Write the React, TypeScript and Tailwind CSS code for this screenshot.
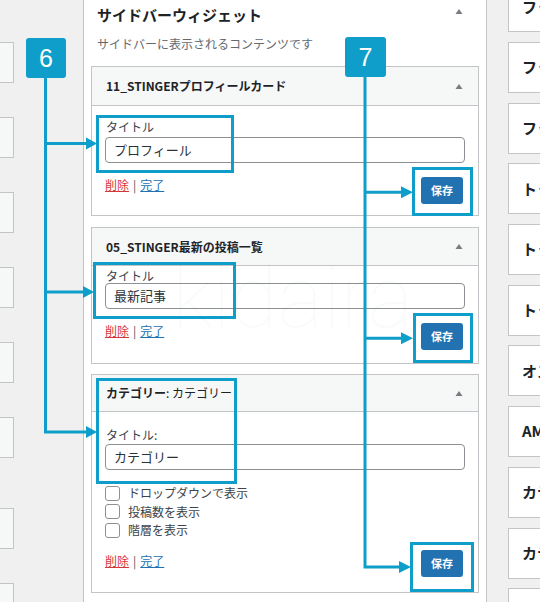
import React from "react";

const Tri = () => (
  <svg width="8" height="5" viewBox="0 0 8 5" className="block">
    <path d="M4 0 L7.5 5 L0.5 5 Z" fill="#787c82" />
  </svg>
);

const SaveBtn = () => (
  <button className="w-[42px] h-[27px] mr-[2px] rounded-[3px] bg-[#2271b1] text-white text-[11px] font-bold leading-none flex items-center justify-center">
    保存
  </button>
);

const Links = () => (
  <div className="text-[12px] leading-[16px] flex items-center gap-[4px]">
    <span className="text-[#d63638] underline">削除</span>
    <span className="text-[#50575e]">|</span>
    <span className="text-[#2271b1] underline">完了</span>
  </div>
);

const Input = ({ value }: { value: string }) => (
  <div className="h-[26px] border border-[#8c8f94] rounded-[4px] bg-white flex items-center pl-[8px] text-[13px] text-[#2c3338]">
    {value}
  </div>
);

const Check = ({ label }: { label: string }) => (
  <div className="h-[18.5px] flex items-center gap-[8px]">
    <span className="w-[15px] h-[15px] border border-[#8c8f94] rounded-[3px] bg-white" />
    <span className="text-[12px] text-[#3c434a]">{label}</span>
  </div>
);

const rightItems = [
  "フッターウィジェット1",
  "フッターウィジェット2",
  "フッターウィジェット3",
  "トップページ上部",
  "トップページ下部",
  "トップページ記事下",
  "オススメ記事",
  "AMP用広告",
  "カテゴリー上部",
  "カテゴリー下部",
  "",
];

const LeftBox = ({ extra = "" }: { extra?: string }) => (
  <div className={"w-[14px] h-[41px] shrink-0 bg-[#f6f7f7] border-y border-r border-[#c3c4c7] " + extra} />
);

export default function App() {
  return (
    <div className="relative w-[540px] h-[602px] overflow-hidden bg-[#f0f0f1] font-['Noto_Sans_CJK_JP',sans-serif]">
      <div className="flex h-full">
        {/* left column */}
        <div className="w-[84px] shrink-0 h-full overflow-hidden border-r border-[#c3c4c7] bg-[#f0f0f1] pt-[42px] flex flex-col gap-[34px]">
          <LeftBox />
          <LeftBox />
          <LeftBox />
          <LeftBox />
          <LeftBox />
          <LeftBox />
          <LeftBox extra="mt-[16px]" />
          <LeftBox />
        </div>

        {/* main panel */}
        <div className="w-[403px] shrink-0 h-full border-r border-[#c3c4c7] bg-white">
          <div className="h-[30px] flex justify-between pl-[13px] pr-[23px]">
            <h2 className="self-center -mt-[2px] text-[15px] font-bold text-[#1d2327] leading-none">
              サイドバーウィジェット
            </h2>
            <div className="mt-[9px]">
              <Tri />
            </div>
          </div>
          <div className="h-[28px] flex items-center pl-[13px] text-[12px] text-[#646970]">
            サイドバーに表示されるコンテンツです
          </div>

          <div className="mx-[7px] mt-[8px] flex flex-col">
            {/* card 1 */}
            <div className="border border-[#c3c4c7] bg-white">
              <div className="h-[39px] border-b border-[#c3c4c7] bg-[#f6f7f7] flex items-center justify-between pl-[14px] pr-[15px]">
                <span className="text-[12px] font-semibold text-[#1d2327]">11_STINGERプロフィールカード</span>
                <Tri />
              </div>
              <div className="px-[13px] pt-[14px] pb-[11px]">
                <div className="ml-[1px] text-[12px] leading-[14px] text-[#3c434a]">タイトル</div>
                <div className="mt-[3px]">
                  <Input value="プロフィール" />
                </div>
                <div className="mt-[14px] flex justify-between items-start">
                  <Links />
                  <SaveBtn />
                </div>
              </div>
            </div>

            {/* card 2 */}
            <div className="mt-[11px] border border-[#c3c4c7] bg-white">
              <div className="h-[38px] border-b border-[#c3c4c7] bg-[#f6f7f7] flex items-center justify-between pl-[14px] pr-[15px]">
                <span className="text-[12px] font-semibold text-[#1d2327]">05_STINGER最新の投稿一覧</span>
                <Tri />
              </div>
              <div className="px-[13px] pt-[3px] pb-[13px]">
                <div className="ml-[1px] text-[12px] leading-[14px] text-[#3c434a]">タイトル</div>
                <Input value="最新記事" />
                <div className="mt-[14px] flex justify-between items-start">
                  <Links />
                  <SaveBtn />
                </div>
              </div>
            </div>

            {/* card 3 */}
            <div className="mt-[10px] border border-[#c3c4c7] bg-white">
              <div className="h-[37px] border-b border-[#c3c4c7] bg-[#f6f7f7] flex items-center justify-between pl-[14px] pr-[15px]">
                <span className="text-[12px] text-[#1d2327]">
                  <span className="font-semibold">カテゴリー</span>: カテゴリー
                </span>
                <Tri />
              </div>
              <div className="px-[13px] pt-[16px] pb-[15px]">
                <div className="ml-[1px] text-[12px] leading-[14px] text-[#3c434a]">タイトル:</div>
                <div className="mt-[2px]">
                  <Input value="カテゴリー" />
                </div>
                <div className="mt-[14px] flex flex-col">
                  <Check label="ドロップダウンで表示" />
                  <Check label="投稿数を表示" />
                  <Check label="階層を表示" />
                </div>
                <div className="mt-[10.5px] flex justify-between items-start">
                  <div className="mt-[3px]">
                    <Links />
                  </div>
                  <SaveBtn />
                </div>
              </div>
            </div>
          </div>
        </div>

        {/* right column */}
        <div className="flex-1 h-full overflow-hidden bg-[#f0f0f1] pl-[21px]">
          <div className="-mt-[18.7px] flex flex-col gap-[9.7px]">
            {rightItems.map((t, i) => (
              <div
                key={i}
                className="w-[300px] h-[51px] shrink-0 bg-white border-y border-l border-[#c3c4c7] flex items-center pl-[13px] whitespace-nowrap text-[15px] font-semibold text-[#1d2327]"
              >
                {t}
              </div>
            ))}
          </div>
        </div>
      </div>

      {/* watermark */}
      <div className="pointer-events-none absolute left-[172px] top-[255px] text-[86px] font-thin leading-none text-[#0a6a6a]/[0.025] font-['Roboto',sans-serif]">
        kidaira
      </div>

      {/* annotation overlay */}
      <svg className="pointer-events-none absolute left-0 top-0" width="540" height="602" viewBox="0 0 540 602">
        <g stroke="#0e9ec9" strokeWidth="3" fill="none" strokeLinejoin="miter">
          <path d="M45.5 78 V432 H88" />
          <path d="M45.5 143.5 H88" />
          <path d="M45.5 292 H85" />
          <path d="M365 77 V567 H401" />
          <path d="M365 192.3 H402" />
          <path d="M365 338.3 H402" />
        </g>
        <g fill="#0e9ec9">
          <path d="M86 137.5 L97 143.5 L86 149.5 Z" />
          <path d="M83 286 L94 292 L83 298 Z" />
          <path d="M86 426 L97 432 L86 438 Z" />
          <path d="M401 186.3 L413 192.3 L401 198.3 Z" />
          <path d="M401 332.3 L413 338.3 L401 344.3 Z" />
          <path d="M399 561 L411 567 L399 573 Z" />
        </g>
      </svg>

      {/* highlight boxes */}
      <div className="pointer-events-none absolute left-[96px] top-[115px] w-[138px] h-[58px] border-[3px] border-[#0e9ec9]" />
      <div className="pointer-events-none absolute left-[93px] top-[262px] w-[143px] h-[57px] border-[3px] border-[#0e9ec9]" />
      <div className="pointer-events-none absolute left-[96px] top-[378px] w-[141px] h-[106px] border-[3px] border-[#0e9ec9]" />
      <div className="pointer-events-none absolute left-[412px] top-[167px] w-[61px] h-[49px] border-[3px] border-[#0e9ec9]" />
      <div className="pointer-events-none absolute left-[413px] top-[313px] w-[60px] h-[50px] border-[3px] border-[#0e9ec9]" />
      <div className="pointer-events-none absolute left-[410px] top-[542px] w-[64px] h-[50px] border-[3px] border-[#0e9ec9]" />

      {/* badges */}
      <div className="absolute left-[26px] top-[38px] w-[40px] h-[40px] rounded-[3px] bg-[#0e9ec9] flex items-center justify-center text-white text-[25px] leading-none font-['Liberation_Sans',sans-serif]">
        6
      </div>
      <div className="absolute left-[345px] top-[37px] w-[41px] h-[40px] rounded-[3px] bg-[#0e9ec9] flex items-center justify-center text-white text-[25px] leading-none font-['Liberation_Sans',sans-serif]">
        7
      </div>
    </div>
  );
}
